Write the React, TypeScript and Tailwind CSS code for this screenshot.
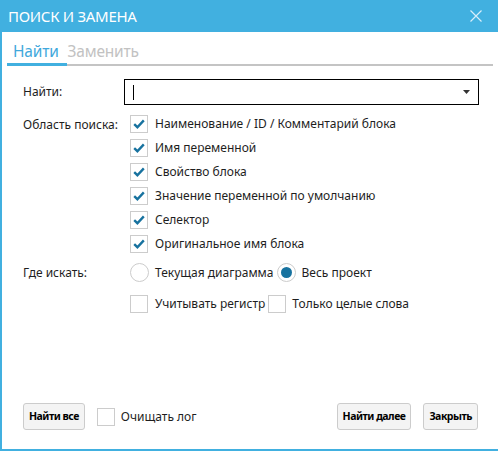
import React from "react";

const font = { fontFamily: '"Noto Sans", "Open Sans", sans-serif' };

function CheckBox({ checked }: { checked?: boolean }) {
  return (
    <span className="flex h-[18px] w-[18px] shrink-0 items-center justify-center border border-[#cccccc] bg-white">
      {checked && (
        <svg width="12" height="10" viewBox="0 0 12 10">
          <path d="M1.2 5.2 L4.4 8.2 L10.8 1.4" fill="none" stroke="#17729f" strokeWidth="2.4" />
        </svg>
      )}
    </span>
  );
}

function Radio({ checked }: { checked?: boolean }) {
  return (
    <span className="flex h-[19px] w-[19px] shrink-0 items-center justify-center rounded-full border border-[#cccccc] bg-white">
      {checked && <span className="h-[11px] w-[11px] rounded-full bg-[#17729f]" />}
    </span>
  );
}

function Btn({ children }: { children: React.ReactNode }) {
  return (
    <button className="h-[27px] rounded-[3px] border border-[#cccccc] bg-[#f4f4f4] px-[5px] text-[10.5px] font-bold tracking-[-0.5px] text-black">
      {children}
    </button>
  );
}

const scopes = [
  "Наименование / ID / Комментарий блока",
  "Имя переменной",
  "Свойство блока",
  "Значение переменной по умолчанию",
  "Селектор",
  "Оригинальное имя блока",
];

export default function App() {
  return (
    <div className="flex h-[451px] w-[498px] flex-col border-b-2 border-l-2 border-[#41b0e0] bg-white text-[12px] text-[#1e1e1e]" style={font}>
      {/* Title bar */}
      <div className="-ml-[2px] flex h-[32px] shrink-0 items-center justify-between bg-[#41b0e0] pl-[8px] pr-[16px] text-white">
        <span className="text-[15px] tracking-[-0.3px]">ПОИСК И ЗАМЕНА</span>
        <svg width="12" height="12" viewBox="0 0 12 12">
          <path d="M0.5 0.5 L11.5 11.5 M11.5 0.5 L0.5 11.5" stroke="#d8eefa" strokeWidth="1.2" />
        </svg>
      </div>

      {/* Tabs */}
      <div className="ml-[5px] mr-[5px] mt-[9px] flex border-b-2 border-[#c4c4c4]">
        <div className="-mb-[2px] border-b-[3px] border-[#41b0e0] pl-[6px] pr-[8px] pb-[2px] text-[15.5px] leading-[20px] tracking-[-0.2px] text-[#41a8dc]">Найти</div>
        <div className="pl-[1px] text-[15.5px] leading-[20px] tracking-[-0.2px] text-[#c2c2c2]">Заменить</div>
      </div>

      {/* Form */}
      <div className="mt-[13px] flex flex-col pl-[21px] pr-[19px]">
        <div className="flex items-center">
          <span className="w-[101px]">Найти:</span>
          <div className="flex h-[26px] flex-1 items-center justify-between border border-black px-[8px]">
            <span className="h-[15px] w-px bg-black" />
            <svg width="7" height="4" viewBox="0 0 7 4">
              <path d="M0 0 H7 L3.5 4 Z" fill="#333" />
            </svg>
          </div>
        </div>

        <div className="mt-[10px] flex">
          <span className="w-[107px] pt-[1px]">Область поиска:</span>
          <div className="flex flex-col gap-[6px]">
            {scopes.map((s) => (
              <label key={s} className="flex h-[18px] items-center gap-[7px]">
                <CheckBox checked />
                <span>{s}</span>
              </label>
            ))}
          </div>
        </div>

        <div className="mt-[10px] flex items-center">
          <span className="w-[107px]">Где искать:</span>
          <div className="flex items-center gap-[6px]">
            <Radio />
            <span>Текущая диаграмма</span>
          </div>
          <div className="ml-[3px] flex items-center gap-[6px]">
            <Radio checked />
            <span>Весь проект</span>
          </div>
        </div>

        <div className="mt-[13px] flex items-center pl-[107px]">
          <div className="flex items-center gap-[7px]">
            <CheckBox />
            <span>Учитывать регистр</span>
          </div>
          <div className="ml-[3px] flex items-center gap-[6px]">
            <CheckBox />
            <span>Только целые слова</span>
          </div>
        </div>
      </div>

      <div className="flex-1" />

      {/* Footer */}
      <div className="mb-[19px] flex items-center pl-[21px] pr-[20px]">
        <Btn>Найти все</Btn>
        <div className="ml-[12px] flex items-center gap-[6px]">
          <CheckBox />
          <span>Очищать лог</span>
        </div>
        <div className="flex-1" />
        <Btn>Найти далее</Btn>
        <div className="ml-[12px]">
          <Btn>Закрыть</Btn>
        </div>
      </div>
    </div>
  );
}
